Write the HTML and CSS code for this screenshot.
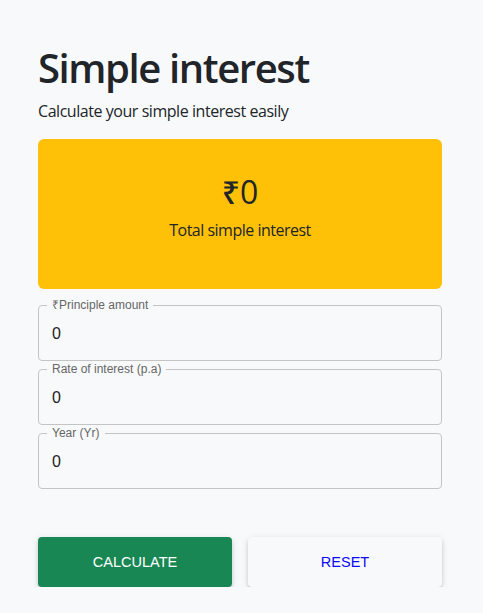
FILE: index.html
```html
<!DOCTYPE html>
<html lang="en">
<head>
<meta charset="utf-8">
<title>Simple interest</title>
<link rel="stylesheet" href="styles.css">
</head>
<body>
<main class="app">
  <h1 class="title">Simple interest</h1>
  <p class="subtitle">Calculate your simple interest easily</p>
  <section class="result">
    <div class="amount">₹0</div>
    <div class="result-label">Total simple interest</div>
  </section>
  <form class="form">
    <fieldset class="field">
      <legend class="field-label">₹Principle amount</legend>
      <input class="field-input" type="text" value="0">
    </fieldset>
    <fieldset class="field">
      <legend class="field-label">Rate of interest (p.a)</legend>
      <input class="field-input" type="text" value="0">
    </fieldset>
    <fieldset class="field">
      <legend class="field-label">Year (Yr)</legend>
      <input class="field-input" type="text" value="0">
    </fieldset>
    <div class="actions">
      <button type="button" class="btn btn-calc">Calculate</button>
      <button type="button" class="btn btn-reset">Reset</button>
    </div>
  </form>
</main>
</body>
</html>
```

FILE: styles.css
```css
html, body {
  margin: 0;
  padding: 0;
  background: #f8f9fa;
}
body {
  font-family: "Open Sans", "Noto Sans", sans-serif;
  color: #212529;
}
.app {
  width: 404px;
  padding: 44px 0 0 38px;
}
.title {
  margin: 0;
  font-size: 40px;
  font-weight: 600;
  line-height: 48px;
  letter-spacing: -1.4px;
}
.subtitle {
  margin: 7px 0 0;
  font-size: 16px;
  line-height: 24px;
  letter-spacing: -0.45px;
}
.result {
  margin-top: 16px;
  height: 150px;
  background: #ffc107;
  border-radius: 6px;
  display: flex;
  flex-direction: column;
  align-items: center;
  padding-top: 34px;
  box-sizing: border-box;
}
.amount {
  font-size: 32px;
  line-height: 38px;
  font-weight: 500;
}
.result-label {
  margin-top: 7px;
  font-size: 16px;
  line-height: 24px;
  letter-spacing: -0.5px;
}
.form {
  margin-top: 9px;
  display: flex;
  flex-direction: column;
  gap: 1px;
}
.field {
  margin: 0;
  padding: 0;
  border: 1px solid #c4c4c4;
  border-radius: 4px;
  min-width: 0;
}
.field-label {
  margin-left: 8px;
  padding: 0 5px;
  font-family: "Liberation Sans", Arial, sans-serif;
  font-size: 12px;
  line-height: 14px;
  color: #666;
}
.field-input {
  display: block;
  box-sizing: border-box;
  width: 100%;
  border: 0;
  outline: 0;
  background: transparent;
  font-family: "Liberation Sans", Arial, sans-serif;
  font-size: 16px;
  line-height: 24px;
  height: 48px;
  padding: 10px 13px 14px;
  color: #212121;
}
.actions {
  margin-top: 47px;
  display: flex;
  gap: 16px;
}
.btn {
  flex: 1;
  height: 50px;
  border: 0;
  border-radius: 4px;
  font-family: "Liberation Sans", Arial, sans-serif;
  font-size: 14.5px;
  text-transform: uppercase;
  box-shadow: 0 3px 3px -2px rgba(0,0,0,0.2), 0 3px 4px 0 rgba(0,0,0,0.14), 0 1px 8px 0 rgba(0,0,0,0.08);
}
.btn-calc {
  background: #198754;
  color: #fff;
}
.btn-reset {
  background: #f8f9fa;
  color: #0a0aff;
}
```
